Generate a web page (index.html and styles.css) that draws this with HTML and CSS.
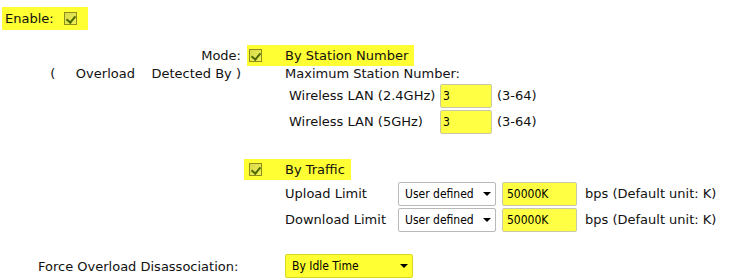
FILE: index.html
```html
<!DOCTYPE html>
<html lang="en">
  <head>
    <meta charset="UTF-8" />
    <title>Load Balance</title>
    <link rel="stylesheet" href="styles.css">
  </head>
  <body>
    <main class="page">
      <div class="enable-row">
        <span class="hl enable">Enable:<span class="cb"></span></span>
      </div>

      <div class="mode">
        <div class="mode-labels">
          <div class="mode-label">Mode:</div>
          <div class="mode-note">(&nbsp;&nbsp;&nbsp;&nbsp; Overload&nbsp;&nbsp;&nbsp; Detected By )</div>
        </div>
        <div class="mode-body">
          <div class="hl opt"><span class="cb"></span><span>By Station Number</span></div>
          <div class="sub-title">Maximum Station Number:</div>
          <div class="field-row">
            <span class="wl-label">Wireless LAN (2.4GHz)</span>
            <input class="num" type="text" value="3" />
            <span>(3-64)</span>
          </div>
          <div class="field-row">
            <span class="wl-label">Wireless LAN (5GHz)</span>
            <input class="num" type="text" value="3" />
            <span>(3-64)</span>
          </div>

          <div class="hl opt traffic"><span class="cb"></span><span>By Traffic</span></div>
          <div class="field-row">
            <span class="tr-label">Upload Limit</span>
            <span class="sel">
              <select><option>User defined</option></select>
              <span class="arrow"></span>
            </span>
            <input class="rate" type="text" value="50000K" />
            <span>bps (Default unit: K)</span>
          </div>
          <div class="field-row">
            <span class="tr-label">Download Limit</span>
            <span class="sel">
              <select><option>User defined</option></select>
              <span class="arrow"></span>
            </span>
            <input class="rate" type="text" value="50000K" />
            <span>bps (Default unit: K)</span>
          </div>
        </div>
      </div>

      <div class="force">
        <span class="force-label">Force Overload Disassociation:</span>
        <span class="sel sel-force">
          <select><option>By Idle Time</option></select>
          <span class="arrow"></span>
        </span>
      </div>
    </main>
  </body>
</html>
```

FILE: styles.css
```css
* {
  box-sizing: border-box;
}
body {
  margin: 0;
  font-family: "DejaVu Sans", Verdana, sans-serif;
  font-size: 13px;
  color: #111;
  background: #fff;
}
.page {
  padding-top: 7px;
}

/* yellow highlight */
.hl {
  background: #ffff33;
}
.cb {
  display: inline-block;
  position: relative;
  width: 13px;
  height: 13px;
  border: 1px solid #8e8e1c;
  background: linear-gradient(135deg, #d8d84a, #f2f25a);
}
.cb::after {
  content: "";
  position: absolute;
  left: 3px;
  top: 1px;
  width: 4px;
  height: 7px;
  border: solid #4f6a00;
  border-width: 0 2px 2px 0;
  transform: rotate(40deg);
}

.enable-row {
  padding-left: 2px;
}
.enable {
  display: inline-flex;
  align-items: center;
  height: 23px;
  padding: 0 11px 0 3px;
}
.enable .cb {
  margin-left: 10px;
}

/* mode block */
.mode {
  display: flex;
  margin-top: 15px;
}
.mode-labels {
  width: 241px;
  text-align: right;
}
.mode-label {
  height: 21px;
  line-height: 21px;
}
.mode-note {
  line-height: 16px;
}
.mode-body {
  margin-left: 6px;
}
.opt {
  display: inline-flex;
  align-items: center;
  height: 21px;
  padding: 0 6px 0 2px;
}
.opt .cb {
  margin-right: 23px;
}
.traffic {
  margin-top: 25px;
  margin-left: -3px;
  padding-left: 5px;
}
.sub-title {
  padding-left: 38px;
  line-height: 16px;
}
.field-row {
  display: flex;
  align-items: center;
  height: 25px;
  margin-top: 1px;
  padding-left: 38px;
}
.wl-label {
  width: 155px;
  padding-left: 4px;
}
.tr-label {
  width: 113px;
}
.num,
.rate {
  height: 24px;
  font-family: "DejaVu Sans Condensed", "DejaVu Sans", sans-serif;
  font-size: 12px;
  color: #000;
  background: #ffff44;
  border: 1px solid #c9c9a8;
  border-radius: 2px;
}
.num {
  width: 52px;
  margin: 0 5px 0 0;
  padding: 0 2px;
}
.rate {
  width: 75px;
  margin: 0 8px 0 6px;
  padding: 0 4px;
}

/* selects with drawn arrow */
.sel {
  position: relative;
  display: inline-block;
}
.sel select {
  appearance: none;
  -webkit-appearance: none;
  width: 98px;
  height: 24px;
  padding: 0 0 0 6px;
  font-family: "DejaVu Sans Condensed", "DejaVu Sans", sans-serif;
  font-size: 12px;
  color: #000;
  background: #fff;
  border: 1px solid #b9b9b9;
  border-radius: 2px;
}
.arrow {
  position: absolute;
  right: 5px;
  top: 10px;
  width: 0;
  height: 0;
  border-left: 4px solid transparent;
  border-right: 4px solid transparent;
  border-top: 4px solid #000;
  pointer-events: none;
}

.force {
  display: flex;
  align-items: center;
  margin-top: 22px;
}
.force-label {
  width: 285px;
  padding-left: 38px;
}
.sel-force select {
  width: 128px;
  background: #ffff33;
  border-color: #d8d820;
}
```
